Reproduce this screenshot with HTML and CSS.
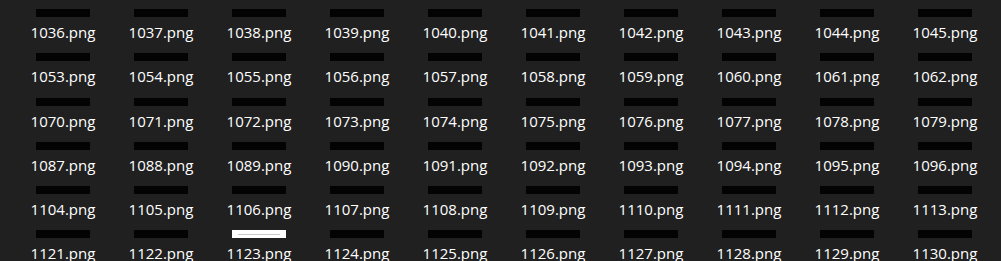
FILE: index.html
```html
<!DOCTYPE html>
<html lang="en">
<head>
    <meta charset="UTF-8">
    <title>Files</title>
    <link rel="stylesheet" href="styles.css">
</head>
<body>
    <div class="file-grid">
        <div class="file"><div class="thumb"></div><span class="name">1036.png</span></div>
        <div class="file"><div class="thumb"></div><span class="name">1037.png</span></div>
        <div class="file"><div class="thumb"></div><span class="name">1038.png</span></div>
        <div class="file"><div class="thumb"></div><span class="name">1039.png</span></div>
        <div class="file"><div class="thumb"></div><span class="name">1040.png</span></div>
        <div class="file"><div class="thumb"></div><span class="name">1041.png</span></div>
        <div class="file"><div class="thumb"></div><span class="name">1042.png</span></div>
        <div class="file"><div class="thumb"></div><span class="name">1043.png</span></div>
        <div class="file"><div class="thumb"></div><span class="name">1044.png</span></div>
        <div class="file"><div class="thumb"></div><span class="name">1045.png</span></div>

        <div class="file"><div class="thumb"></div><span class="name">1053.png</span></div>
        <div class="file"><div class="thumb"></div><span class="name">1054.png</span></div>
        <div class="file"><div class="thumb"></div><span class="name">1055.png</span></div>
        <div class="file"><div class="thumb"></div><span class="name">1056.png</span></div>
        <div class="file"><div class="thumb"></div><span class="name">1057.png</span></div>
        <div class="file"><div class="thumb"></div><span class="name">1058.png</span></div>
        <div class="file"><div class="thumb"></div><span class="name">1059.png</span></div>
        <div class="file"><div class="thumb"></div><span class="name">1060.png</span></div>
        <div class="file"><div class="thumb"></div><span class="name">1061.png</span></div>
        <div class="file"><div class="thumb"></div><span class="name">1062.png</span></div>

        <div class="file"><div class="thumb"></div><span class="name">1070.png</span></div>
        <div class="file"><div class="thumb"></div><span class="name">1071.png</span></div>
        <div class="file"><div class="thumb"></div><span class="name">1072.png</span></div>
        <div class="file"><div class="thumb"></div><span class="name">1073.png</span></div>
        <div class="file"><div class="thumb"></div><span class="name">1074.png</span></div>
        <div class="file"><div class="thumb"></div><span class="name">1075.png</span></div>
        <div class="file"><div class="thumb"></div><span class="name">1076.png</span></div>
        <div class="file"><div class="thumb"></div><span class="name">1077.png</span></div>
        <div class="file"><div class="thumb"></div><span class="name">1078.png</span></div>
        <div class="file"><div class="thumb"></div><span class="name">1079.png</span></div>

        <div class="file"><div class="thumb"></div><span class="name">1087.png</span></div>
        <div class="file"><div class="thumb"></div><span class="name">1088.png</span></div>
        <div class="file"><div class="thumb"></div><span class="name">1089.png</span></div>
        <div class="file"><div class="thumb"></div><span class="name">1090.png</span></div>
        <div class="file"><div class="thumb"></div><span class="name">1091.png</span></div>
        <div class="file"><div class="thumb"></div><span class="name">1092.png</span></div>
        <div class="file"><div class="thumb"></div><span class="name">1093.png</span></div>
        <div class="file"><div class="thumb"></div><span class="name">1094.png</span></div>
        <div class="file"><div class="thumb"></div><span class="name">1095.png</span></div>
        <div class="file"><div class="thumb"></div><span class="name">1096.png</span></div>

        <div class="file"><div class="thumb"></div><span class="name">1104.png</span></div>
        <div class="file"><div class="thumb"></div><span class="name">1105.png</span></div>
        <div class="file"><div class="thumb"></div><span class="name">1106.png</span></div>
        <div class="file"><div class="thumb"></div><span class="name">1107.png</span></div>
        <div class="file"><div class="thumb"></div><span class="name">1108.png</span></div>
        <div class="file"><div class="thumb"></div><span class="name">1109.png</span></div>
        <div class="file"><div class="thumb"></div><span class="name">1110.png</span></div>
        <div class="file"><div class="thumb"></div><span class="name">1111.png</span></div>
        <div class="file"><div class="thumb"></div><span class="name">1112.png</span></div>
        <div class="file"><div class="thumb"></div><span class="name">1113.png</span></div>

        <div class="file"><div class="thumb"></div><span class="name">1121.png</span></div>
        <div class="file"><div class="thumb"></div><span class="name">1122.png</span></div>
        <div class="file"><div class="thumb thumb-light"></div><span class="name">1123.png</span></div>
        <div class="file"><div class="thumb"></div><span class="name">1124.png</span></div>
        <div class="file"><div class="thumb"></div><span class="name">1125.png</span></div>
        <div class="file"><div class="thumb"></div><span class="name">1126.png</span></div>
        <div class="file"><div class="thumb"></div><span class="name">1127.png</span></div>
        <div class="file"><div class="thumb"></div><span class="name">1128.png</span></div>
        <div class="file"><div class="thumb"></div><span class="name">1129.png</span></div>
        <div class="file"><div class="thumb"></div><span class="name">1130.png</span></div>
    </div>
</body>
</html>
```

FILE: styles.css
```css
html, body {
    margin: 0;
    padding: 0;
    height: 100%;
    overflow: hidden;
    background-color: #202020;
}
body {
    font-family: "Open Sans", "Noto Sans", sans-serif;
    color: #ffffff;
}
.file-grid {
    display: grid;
    grid-template-columns: repeat(10, 98px);
    grid-auto-rows: 44.3px;
    padding-left: 14px;
}
.file {
    display: flex;
    flex-direction: column;
    align-items: center;
    padding-top: 9px;
}
.thumb {
    width: 54px;
    height: 8px;
    background-color: #030303;
}
/* the one white image */
.thumb-light {
    position: relative;
    background-color: #ffffff;
}
.thumb-light::after {
    content: "";
    position: absolute;
    left: 6px;
    right: 6px;
    top: 4px;
    height: 1px;
    background-color: #c8c8c8;
}
.name {
    margin-top: 5px;
    font-size: 15px;
    line-height: 20px;
    white-space: nowrap;
}
```
